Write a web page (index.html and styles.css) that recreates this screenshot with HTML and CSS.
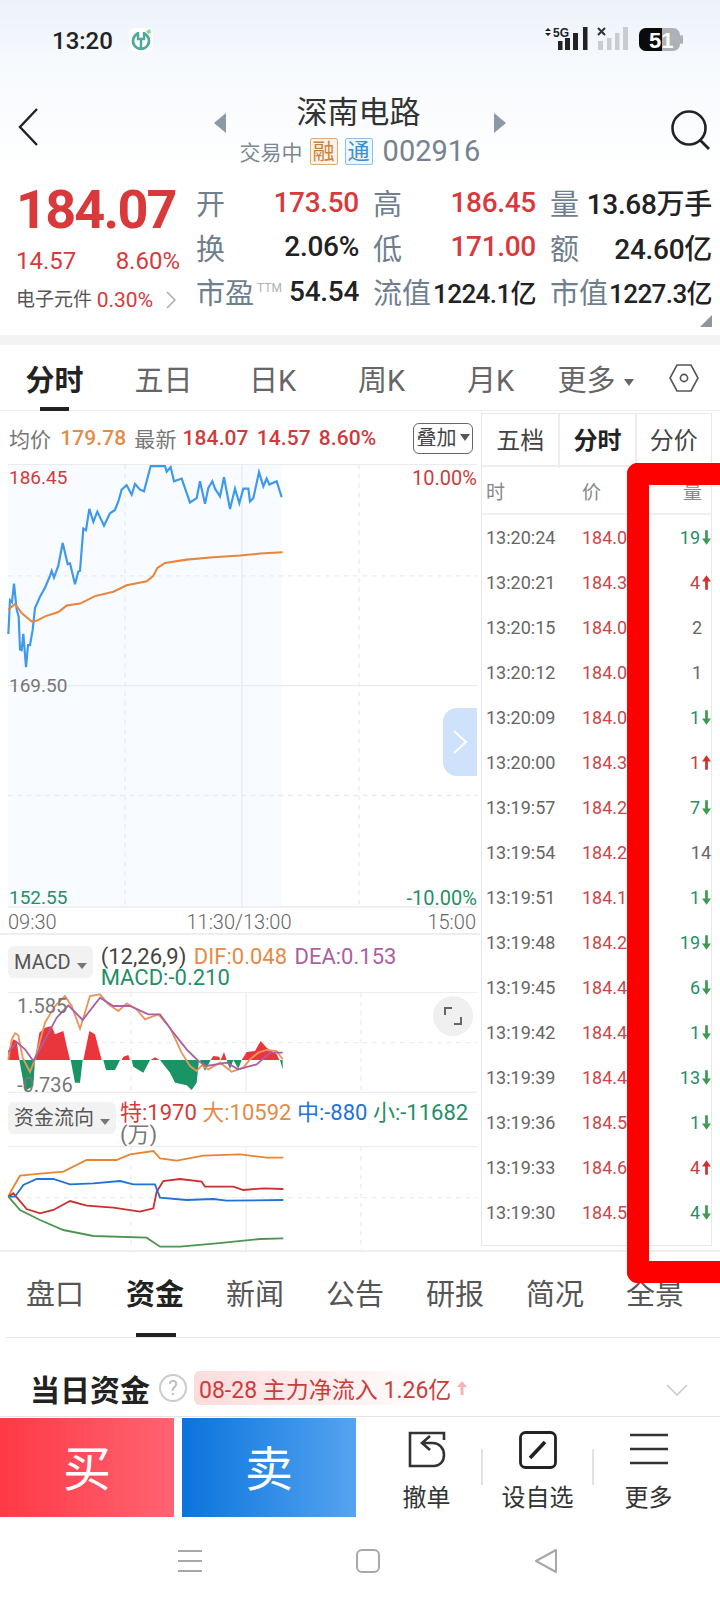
FILE: index.html
```html
<!DOCTYPE html>
<html lang="zh-CN">
<head>
<meta charset="UTF-8">
<meta name="viewport" content="width=device-width, initial-scale=1.0">
<title>深南电路</title>
<link rel="stylesheet" href="styles.css">
</head>
<body>

<div class="page">

 <div class="top">
  <div class="status">
   <span class="clock">13:20</span>
   <svg class="app-logo" width="24" height="24" viewBox="0 0 24 24">
    <rect width="24" height="24" rx="6" fill="#fff"/>
    <path d="M9 5.5a8 8 0 1 0 6 0" fill="none" stroke="#4fa89c" stroke-width="2.6"/>
    <path d="M9 4v7h6V4M12 11v9" fill="none" stroke="#4fa89c" stroke-width="2.4"/>
    <path d="M17 3l4-2 1 4-3 1z" fill="#8fd78a"/>
   </svg>
   <svg class="status-right" width="140" height="24" viewBox="0 0 140 24">
    <path d="M3 1l3 3H0zM3 9L0 6h6z" fill="#222"/>
    <text x="8" y="10" class="sig-text">5G</text>
    <rect x="13" y="14" width="4.5" height="9" fill="#222"/>
    <rect x="20" y="11" width="5" height="12" fill="#222"/>
    <rect x="28" y="6" width="5" height="17" fill="#222"/>
    <rect x="38" y="0" width="4.5" height="23" fill="#222"/>
    <path d="M53 1l7 7M60 1l-7 7" stroke="#333" stroke-width="2"/>
    <rect x="53" y="14" width="5" height="9" fill="#c9cdd2"/>
    <rect x="62" y="11" width="4.5" height="12" fill="#c9cdd2"/>
    <rect x="70" y="6" width="4.5" height="17" fill="#c9cdd2"/>
    <rect x="78" y="0" width="5" height="23" fill="#c9cdd2"/>
    <rect x="94" y="1" width="41" height="23" rx="7" fill="#aeb1b6"/>
    <path d="M101 1h16v23h-16a7 7 0 0 1-7-7V8a7 7 0 0 1 7-7z" fill="#0b0b0b"/>
    <rect x="135" y="8" width="3" height="9" rx="1.5" fill="#aeb1b6"/>
    <text x="104" y="20.5" class="batt-text">51</text>
   </svg>
  </div>

  <div class="title-bar">
   <svg class="back" width="20" height="38" viewBox="0 0 20 38"><path d="M19 1L2 19l17 18" fill="none" stroke="#222" stroke-width="2.4"/></svg>
   <div class="title-mid">
    <span class="tri-left"></span>
    <div class="title-text">
     <div class="stock-name">深南电路</div>
     <div class="stock-sub">
      <span>交易中</span>
      <span class="tag tag-orange">融</span>
      <span class="tag tag-blue">通</span>
      <span class="stock-code">002916</span>
     </div>
    </div>
    <span class="tri-right"></span>
   </div>
   <svg class="search" width="42" height="40" viewBox="0 0 42 40"><circle cx="19" cy="18" r="16.5" fill="none" stroke="#222" stroke-width="2.6"/><path d="M30 30l9 9" stroke="#222" stroke-width="2.8"/></svg>
  </div>

  <div class="quote">
   <div class="quote-left">
    <div class="price">184.07</div>
    <div class="change"><span>14.57</span><span>8.60%</span></div>
    <div class="sector">电子元件 <em>0.30%</em><svg width="10" height="18" viewBox="0 0 10 18"><path d="M1 1l8 8-8 8" fill="none" stroke="#aaa" stroke-width="1.5"/></svg></div>
   </div>
   <div class="stats">
    <div class="stat"><label>开</label><b class="red">173.50</b></div>
    <div class="stat"><label>高</label><b class="red">186.45</b></div>
    <div class="stat"><label>量</label><b>13.68万手</b></div>
    <div class="stat"><label>换</label><b>2.06%</b></div>
    <div class="stat"><label>低</label><b class="red">171.00</b></div>
    <div class="stat"><label>额</label><b>24.60亿</b></div>
    <div class="stat"><label>市盈<sup>TTM</sup></label><b>54.54</b></div>
    <div class="stat"><label>流值</label><b class="tight">1224.1亿</b></div>
    <div class="stat"><label>市值</label><b class="tight">1227.3亿</b></div>
   </div>
   <span class="corner"></span>
  </div>
 </div>

 <div class="band"></div>

 <div class="period-tabs">
  <span class="period active">分时</span>
  <span class="period">五日</span>
  <span class="period">日K</span>
  <span class="period">周K</span>
  <span class="period">月K</span>
  <span class="period more">更多<i class="caret"></i></span>
  <svg class="hex" width="30" height="30" viewBox="0 0 30 30"><path d="M8 2h14l7 13-7 13H8L1 15z" fill="none" stroke="#555" stroke-width="1.6"/><circle cx="15" cy="15" r="3.6" fill="none" stroke="#555" stroke-width="1.6"/></svg>
 </div>

 <div class="main">
  <div class="charts">
   <div class="info-row">
    <span class="gray">均价</span><span class="orange">179.78</span>
    <span class="gray latest">最新</span><span class="red">184.07</span><span class="red">14.57</span><span class="red">8.60%</span>
    <span class="overlay-btn">叠加<i class="caret dark"></i></span>
   </div>

   <div class="price-chart">
    <svg width="480" height="444" viewBox="0 189 1440 1314" preserveAspectRatio="none">
     <rect x="24" y="190" width="822" height="1310" fill="#f8fbff"/>
     <g stroke="#ebebeb" stroke-width="4" fill="none">
      <path d="M24 190H1432M24 845H1432M24 1500H1432M726 190V1500"/>
      <path stroke-dasharray="14 14" d="M24 520H1432M24 1170H1432M375 190V1500M1077 190V1500"/>
     </g>
     <polyline fill="none" stroke="#3e98ec" stroke-width="6.500" points="25,692 30,592 36,598 42,543 50,620 56,640 60,738 65,740 70,692 78,790 84,725 90,725 98,680 105,615 120,582 135,555 150,520 155,505 162,525 175,490 188,423 203,485 210,483 225,545 235,507 240,505 250,380 258,385 268,322 280,360 292,330 312,372 330,335 345,325 355,300 365,265 380,252 395,280 405,248 420,265 432,270 452,195 495,195 500,212 512,198 522,240 545,232 570,303 590,290 600,240 615,307 625,260 637,240 645,262 660,285 672,228 690,322 705,262 718,305 730,262 745,262 750,300 760,290 777,213 790,255 800,232 808,250 830,240 845,287"/>
     <polyline fill="none" stroke="#e8853a" stroke-width="6" points="25,620 45,603 65,630 95,655 110,653 135,640 175,627 200,608 240,602 285,580 340,567 380,548 440,536 460,520 472,497 495,482 560,472 640,465 720,460 780,454 848,450"/>
    </svg>
    <span class="axis left red a-tl">186.45</span>
    <span class="axis red a-tr">10.00%</span>
    <span class="axis left gray a-ml">169.50</span>
    <span class="axis left green a-bl">152.55</span>
    <span class="axis green a-br">-10.00%</span>
    <span class="collapse"><svg width="16" height="28" viewBox="0 0 16 28"><path d="M2 3l12 11L2 25" fill="none" stroke="#fff" stroke-width="2"/></svg></span>
   </div>

   <div class="time-axis"><span>09:30</span><span class="mid-time">11:30/13:00</span><span>15:00</span></div>

   <div class="ind-head">
    <span class="ind-btn">MACD<i class="caret small"></i></span>
    <div class="ind-text">
     <span class="dark">(12,26,9)</span> <span class="orange">DIF:0.048</span> <span class="purple">DEA:0.153</span><br>
     <span class="green">MACD:-0.210</span>
    </div>
   </div>

   <div class="macd-chart">
    <span class="axis gray m-top">1.585</span>
    <span class="axis gray m-bot">-0.736</span>
    <svg width="480" height="101" viewBox="0 198 1440 303">
     <g stroke="#eeeeee" stroke-width="4" fill="none">
      <path d="M24 199H1432M24 499H1432"/>
      <path d="M738 199V499"/>
      <path stroke-dasharray="14 14" d="M24 350H1432M393 199V499M1083 199V499"/>
     </g>
     <g fill="#e9363c">
      <path d="M25 402V375L40 340 50 345 58 402z"/>
      <path d="M105 402L118 320 135 305 155 300 165 325 190 315 200 360 210 402z"/>
      <path d="M250 402L268 315 285 325 305 402z"/>
      <path d="M365 402L370 392 385 387 390 402zM452 402L465 394 478 402zM632 402L640 390 658 392 660 402zM662 402L672 378 680 402z"/>
      <path d="M725 402L740 378 765 375 782 345 800 365 830 385 838 402z"/>
     </g>
     <g fill="#1a9464">
      <path d="M58 402L65 440 75 495 100 480 105 402z"/>
      <path d="M212 402L225 470 240 470 248 402z"/>
      <path d="M310 402L318 432 345 432 360 402z"/>
      <path d="M395 402L400 422 430 440 450 402z"/>
      <path d="M480 402L510 440 525 470 560 478 575 492 590 470 597 402z"/>
      <path d="M600 402L615 435 632 402zM680 402L690 430 700 402zM700 402L715 428 725 402zM840 402L848 430 848 402z"/>
     </g>
     <polyline fill="none" stroke="#e8965a" stroke-width="5.500" points="25,400 35,340 45,322 55,328 68,395 90,438 105,400 135,290 165,240 195,210 215,240 240,308 270,210 300,205 325,235 355,255 380,232 410,250 435,280 475,265 510,305 545,380 570,420 590,435 605,418 625,430 660,410 695,437 730,425 750,400 775,380 800,372 830,375 848,400"/>
     <polyline fill="none" stroke="#ae5fa0" stroke-width="5.500" points="25,378 50,348 75,370 100,405 130,350 170,275 205,238 248,282 300,215 340,240 390,240 445,265 480,265 520,320 560,370 595,405 620,420 680,410 715,430 770,415 810,380 848,380"/>
    </svg>
    <span class="expand"><svg width="20" height="20" viewBox="0 0 20 20"><path d="M2 9V2h7M18 11v7h-7" fill="none" stroke="#666" stroke-width="2"/></svg></span>
   </div>

   <div class="ind-head funds-head">
    <span class="ind-btn">资金流向<i class="caret small"></i></span>
    <div class="ind-text">
     <span class="red">特:1970</span> <span class="orange">大:10592</span> <span class="blue">中:-880</span> <span class="green">小:-11682</span><br>
     <span class="gray">(万)</span>
    </div>
   </div>

   <div class="funds-chart">
    <svg width="480" height="104" viewBox="0 663 1440 312">
     <g stroke="#eeeeee" stroke-width="4" fill="none">
      <path d="M24 665H1432M738 665V975"/>
      <path stroke-dasharray="14 14" d="M24 818H1432M393 665V975M1083 665V975"/>
     </g>
     <g fill="none" stroke-width="5.500">
      <polyline stroke="#e8852f" points="25,815 35,795 60,752 130,745 190,740 260,705 350,705 390,688 460,678 480,700 530,707 610,692 720,688 800,698 850,698"/>
      <polyline stroke="#c9302f" points="25,815 40,805 80,852 120,865 160,855 210,828 260,842 340,848 420,860 460,850 470,800 490,768 540,762 605,770 615,785 700,785 730,795 790,790 850,792"/>
      <polyline stroke="#1f72d8" points="25,815 45,815 70,780 110,762 160,762 210,778 280,775 360,768 400,778 465,778 480,818 560,825 640,822 680,827 850,825"/>
      <polyline stroke="#4d9550" points="25,815 60,855 120,885 190,915 280,933 440,938 480,965 540,965 650,955 780,942 850,940"/>
     </g>
    </svg>
   </div>
  </div>

  <div class="trades">
   <div class="trade-tabs">
    <span>五档</span><span class="on">分时</span><span>分价</span>
   </div>
   <div class="trade-head"><span>时</span><span>价</span><span>量</span></div>
   <div class="trade-row"><span>13:20:24</span><span class="price-cell">184.07</span><span class="qty green">19<svg class="arw"><use href="#down"/></svg></span></div>
   <div class="trade-row"><span>13:20:21</span><span class="price-cell">184.30</span><span class="qty red">4<svg class="arw"><use href="#up"/></svg></span></div>
   <div class="trade-row"><span>13:20:15</span><span class="price-cell">184.07</span><span class="qty flat">2</span></div>
   <div class="trade-row"><span>13:20:12</span><span class="price-cell">184.04</span><span class="qty flat">1</span></div>
   <div class="trade-row"><span>13:20:09</span><span class="price-cell">184.07</span><span class="qty green">1<svg class="arw"><use href="#down"/></svg></span></div>
   <div class="trade-row"><span>13:20:00</span><span class="price-cell">184.35</span><span class="qty red">1<svg class="arw"><use href="#up"/></svg></span></div>
   <div class="trade-row"><span>13:19:57</span><span class="price-cell">184.20</span><span class="qty green">7<svg class="arw"><use href="#down"/></svg></span></div>
   <div class="trade-row"><span>13:19:54</span><span class="price-cell">184.21</span><span class="qty wide">14</span></div>
   <div class="trade-row"><span>13:19:51</span><span class="price-cell">184.18</span><span class="qty green">1<svg class="arw"><use href="#down"/></svg></span></div>
   <div class="trade-row"><span>13:19:48</span><span class="price-cell">184.20</span><span class="qty green">19<svg class="arw"><use href="#down"/></svg></span></div>
   <div class="trade-row"><span>13:19:45</span><span class="price-cell">184.40</span><span class="qty green">6<svg class="arw"><use href="#down"/></svg></span></div>
   <div class="trade-row"><span>13:19:42</span><span class="price-cell">184.40</span><span class="qty green">1<svg class="arw"><use href="#down"/></svg></span></div>
   <div class="trade-row"><span>13:19:39</span><span class="price-cell">184.41</span><span class="qty green">13<svg class="arw"><use href="#down"/></svg></span></div>
   <div class="trade-row"><span>13:19:36</span><span class="price-cell">184.50</span><span class="qty green">1<svg class="arw"><use href="#down"/></svg></span></div>
   <div class="trade-row"><span>13:19:33</span><span class="price-cell">184.60</span><span class="qty red">4<svg class="arw"><use href="#up"/></svg></span></div>
   <div class="trade-row"><span>13:19:30</span><span class="price-cell">184.57</span><span class="qty green">4<svg class="arw"><use href="#down"/></svg></span></div>
  </div>
 </div>

 <div class="sub-tabs">
  <span class="sub">盘口</span>
  <span class="sub active">资金</span>
  <span class="sub">新闻</span>
  <span class="sub">公告</span>
  <span class="sub">研报</span>
  <span class="sub">简况</span>
  <span class="sub">全景</span>
 </div>

 <div class="flow-row">
  <b class="flow-title">当日资金</b>
  <span class="help">?</span>
  <span class="flow-badge">08-28 主力净流入 1.26亿<svg width="10" height="14" viewBox="0 0 10 14"><path d="M5 0l5 6H6.500v8h-3V6H0z" fill="#f6b3b3"/></svg></span>
  <svg class="flow-arrow" width="22" height="12" viewBox="0 0 22 12"><path d="M1 1l10 10L21 1" fill="none" stroke="#c4ccd3" stroke-width="1.6"/></svg>
 </div>

 <div class="trade-bar">
  <div class="buy">买</div>
  <div class="sell">卖</div>
  <div class="tool">
   <svg width="38" height="38" viewBox="0 0 38 38"><path d="M36 9V2H2v33h24c6 0 10-5 10-11 0-7-5-12-11-12H15M22 5l-8 7 8 7" fill="none" stroke="#333" stroke-width="2.600"/></svg>
   <span>撤单</span>
  </div>
  <i class="tool-sep"></i>
  <div class="tool">
   <svg width="38" height="38" viewBox="0 0 38 38"><rect x="1.500" y="1.500" width="35" height="35" rx="5" fill="none" stroke="#222" stroke-width="2.800"/><path d="M11 27l15-16" stroke="#222" stroke-width="3.600"/></svg>
   <span>设自选</span>
  </div>
  <i class="tool-sep"></i>
  <div class="tool">
   <svg width="38" height="38" viewBox="0 0 38 38"><path d="M0 4h38M0 18h38M0 32h38" stroke="#333" stroke-width="2.600"/></svg>
   <span>更多</span>
  </div>
 </div>

 <div class="nav-bar">
  <svg width="24" height="24" viewBox="0 0 24 24"><path d="M0 2h24M0 12h24M0 22h24" stroke="#a8a8a8" stroke-width="2"/></svg>
  <svg width="24" height="24" viewBox="0 0 24 24"><rect x="1" y="1" width="22" height="22" rx="5" fill="none" stroke="#a8a8a8" stroke-width="2"/></svg>
  <svg width="24" height="24" viewBox="0 0 24 24"><path d="M22 1v22L2 12z" fill="none" stroke="#a8a8a8" stroke-width="2" stroke-linejoin="round"/></svg>
 </div>

 <div class="red-frame"></div>

 <svg width="0" height="0" class="defs">
  <symbol id="down" viewBox="0 0 10 16"><path d="M3.500 0h3v9H10l-5 7-5-7h3.500z" fill="#3d9a50"/></symbol>
  <symbol id="up" viewBox="0 0 10 16"><path d="M3.500 16h3V7H10L5 0 0 7h3.500z" fill="#d0302f"/></symbol>
 </svg>
</div>

</body>
</html>
```

FILE: styles.css
```css
body, html {
 margin: 0;
 padding: 0;
 background-color: #fff;
 font-family: Roboto, "Noto Sans CJK SC", sans-serif;
 color: #222;
}
.page {
 position: relative;
 width: 720px;
 height: 1604px;
 overflow: hidden;
}
i { font-style: normal; }

.red { color: #cf3b3c; }
.green { color: #1f8f66; }
.gray { color: #777; }
.orange { color: #e58b45; }
.purple { color: #ae5fa0; }
.blue { color: #1f72d8; }
.dark { color: #444; }

/* top block */
.top {
 height: 335px;
 background: linear-gradient(#ecf2fb 0, #f6f9fd 60px, #fff 170px);
}
.status {
 height: 80px;
 display: flex;
 align-items: center;
 padding-left: 52px;
 box-sizing: border-box;
}
.clock {
 font-size: 24px;
 font-weight: 500;
 width: 77px;
 margin-top: 1px;
}
.status-right {
 margin-left: 392px;
 margin-top: -2px;
}
.sig-text {
 font: 700 12px "Liberation Sans", sans-serif;
 fill: #222;
}
.batt-text {
 font: 700 22px "Liberation Sans", sans-serif;
 fill: #fff;
}

.title-bar {
 height: 92px;
 display: grid;
 grid-template-columns: 1fr auto 1fr;
 align-items: start;
 padding: 0 18px;
 box-sizing: border-box;
}
.back { margin-top: 28px; }
.search {
 justify-self: end;
 margin: 30px -10px 0 0;
}
.title-mid {
 width: 292px;
 display: flex;
 justify-content: space-between;
 align-items: flex-start;
}
.tri-left, .tri-right {
 width: 0;
 height: 0;
 border-top: 10px solid transparent;
 border-bottom: 10px solid transparent;
 margin-top: 33px;
}
.tri-left { border-right: 12px solid #8c98a6; }
.tri-right { border-left: 12px solid #8c98a6; }
.title-text {
 text-align: center;
 margin-top: 15px;
}
.stock-name {
 font-size: 31px;
 line-height: 36px;
 color: #333;
 margin-right: 3px;
}
.stock-sub {
 display: flex;
 align-items: center;
 font-size: 21px;
 color: #7a8794;
 height: 34px;
 margin-top: 3px;
}
.tag {
 width: 26px;
 height: 25px;
 margin-left: 7px;
 border: 1px solid;
 border-radius: 2px;
 font-size: 22px;
 line-height: 25px;
 text-align: center;
}
.tag-orange { color: #c9833f; border-color: #e0a877; background: #fdf3e9; }
.tag-blue { color: #3b8ed0; border-color: #8cc0e8; background: #edf6fd; }
.stock-code {
 font-size: 29px;
 margin-left: 10px;
 color: #75838f;
}

.quote {
 position: relative;
 height: 163px;
 display: flex;
 padding-top: 8px;
 box-sizing: border-box;
}
.quote-left {
 width: 196px;
 padding: 1px 0 0 16px;
 box-sizing: border-box;
}
.price {
 font-size: 54px;
 font-weight: 700;
 line-height: 50px;
 margin-top: 4px;
 margin-left: 0;
 letter-spacing: -1.800px;
 color: #d9393b;
}
.change {
 display: flex;
 justify-content: space-between;
 width: 164px;
 font-size: 24px;
 line-height: 28px;
 margin-top: 12px;
 color: #d9393b;
}
.sector {
 display: flex;
 align-items: center;
 font-size: 19px;
 color: #555;
 line-height: 24px;
 margin-top: 13px;
 white-space: pre;
}
.sector em {
 font-style: normal;
 font-size: 21px;
 color: #d9393b;
}
.sector svg { margin-left: 13px; }
.stats {
 width: 516px;
 display: grid;
 grid-template-columns: 163px 163px 162px;
 column-gap: 14px;
 grid-auto-rows: 44.500px;
}
.stat {
 display: flex;
 justify-content: space-between;
 align-items: center;
 white-space: nowrap;
}
.stat label {
 font-size: 29px;
 color: #6f7f8e;
}
.stat sup {
 font-size: 12px;
 color: #aab2ba;
 vertical-align: 12px;
 line-height: 0;
 margin-left: 3px;
}
.stat b {
 font-size: 28px;
 font-weight: 500;
 letter-spacing: -0.3px;
}
.stat b.red { color: #d9393b; }
.stat b.tight {
 font-size: 26px;
 letter-spacing: -0.6px;
}
.corner {
 position: absolute;
 right: 8px;
 bottom: 8px;
 border-left: 12px solid transparent;
 border-bottom: 12px solid #8e959c;
}

.band {
 height: 10px;
 background-color: #f3f3f3;
}

/* period tabs */
.period-tabs {
 height: 66px;
 display: flex;
 align-items: center;
 border-bottom: 1px solid #eee;
 box-sizing: border-box;
 position: relative;
}
.period {
 width: 109px;
 text-align: center;
 font-size: 29px;
 color: #666;
 white-space: nowrap;
}
.period.more { margin-left: -4px; }
.period.active {
 font-weight: 700;
 color: #222;
}
.period.active::after {
 content: "";
 position: absolute;
 left: 40px;
 bottom: -1px;
 width: 29px;
 height: 4px;
 background-color: #222;
}
.caret {
 display: inline-block;
 border-left: 5px solid transparent;
 border-right: 5px solid transparent;
 border-top: 7px solid #666;
 margin-left: 8px;
 vertical-align: 5px;
}
.caret.dark { border-top-color: #555; margin-left: 3px; vertical-align: 4px; }
.caret.small { border-top-color: #777; margin-left: 6px; vertical-align: 0; border-top-width: 6px; }
.hex { margin-left: 19px; }

/* main */
.main {
 display: flex;
 height: 839px;
 border-bottom: 2px solid #eee;
 box-sizing: content-box;
 margin-bottom: -2px;
}
.charts { width: 480px; }
.info-row {
 height: 53px;
 display: flex;
 align-items: center;
 padding-left: 9px;
 font-size: 21px;
 font-weight: 500;
 letter-spacing: 0.1px;
 position: relative;
}
.info-row span { margin-right: 8px; white-space: nowrap; }
.info-row .gray { font-weight: 400; margin-right: 9px; }
.info-row .latest { margin-right: 6px; }
.overlay-btn {
 position: absolute;
 left: 413px;
 top: 12px;
 margin: 0 !important;
 width: 60px;
 height: 31px;
 box-sizing: border-box;
 border: 1.500px solid #666;
 border-radius: 6px;
 font-size: 20px;
 font-weight: 400;
 line-height: 28px;
 text-align: center;
 color: #444;
 letter-spacing: 0;
}
.price-chart {
 position: relative;
 height: 444px;
}
.price-chart svg, .macd-chart svg, .funds-chart svg { display: block; }
.axis {
 position: absolute;
 font-size: 20px;
 line-height: 22px;
}
.axis.left { font-size: 19px; }
.a-tl { left: 9px; top: 3px; }
.a-tr { right: 3px; top: 3px; }
.a-ml { left: 9px; top: 211px; }
.a-bl { left: 9px; top: 423px; }
.a-br { right: 3px; top: 423px; }
.collapse {
 position: absolute;
 left: 443px;
 top: 244px;
 width: 34px;
 height: 68px;
 background-color: #cfe2fb;
 border-radius: 14px 0 0 14px;
 display: flex;
 align-items: center;
 justify-content: center;
}
.time-axis {
 height: 27px;
 display: flex;
 justify-content: space-between;
 padding: 2px 4px 0 8px;
 font-size: 20px;
 line-height: 24px;
 color: #666;
 font-weight: 300;
 border-bottom: 2px solid #eee;
 box-sizing: border-box;
}
.mid-time { margin-right: 6px; }
.ind-head {
 height: 57px;
 display: flex;
 padding: 11px 0 0 8px;
 box-sizing: border-box;
}
.funds-head { height: 53px; padding-top: 9px; }
.ind-btn {
 height: 32px;
 flex: none;
 padding: 0 6px;
 background-color: #f2f2f2;
 border-radius: 6px;
 font-size: 20px;
 line-height: 32px;
 color: #555;
 white-space: nowrap;
}
.ind-text {
 font-size: 22px;
 line-height: 21px;
 margin-left: 8px;
 white-space: nowrap;
}
.ind-text span {
 display: inline-block;
 margin-right: 2px;
}
.funds-head .ind-text { margin-left: 4px; line-height: 22px; }
.funds-head .ind-text span { margin-right: 0; }
.macd-chart {
 position: relative;
 height: 101px;
}
.m-top { left: 17px; top: 3px; }
.m-bot { left: 17px; top: 82px; }
.expand {
 position: absolute;
 left: 433px;
 top: 4px;
 width: 40px;
 height: 40px;
 border-radius: 50%;
 background-color: #f0f0f0;
 display: flex;
 align-items: center;
 justify-content: center;
}
.funds-chart { height: 104px; }

/* trade list */
.trades {
 width: 231px;
 height: 833px;
 margin: 2px 0 0 1px;
 border: 1px solid #e8e8e8;
 box-sizing: border-box;
}
.trade-tabs {
 display: grid;
 grid-template-columns: 1fr 1fr 1fr;
 height: 51px;
 border-bottom: 2px solid #eee;
 font-size: 24px;
 line-height: 54px;
 text-align: center;
 color: #444;
}
.trade-tabs span + span { border-left: 2px solid #eee; }
.trade-tabs .on { font-weight: 700; color: #222; }
.trade-head, .trade-row {
 display: grid;
 grid-template-columns: 96px 1fr auto;
 padding-left: 4px;
 align-items: center;
}
.trade-head {
 height: 46px;
 font-size: 19px;
 color: #888;
 border-bottom: 2px solid #f0f0f0;
 padding-right: 9px;
}
.trade-row {
 height: 45px;
 font-size: 18px;
 color: #666;
}
.price-cell { color: #c8484a; }
.qty {
 display: flex;
 align-items: center;
 justify-content: flex-end;
}
.qty.flat { padding-right: 9px; }
.arw {
 width: 9px;
 height: 15px;
 margin-left: 2px;
}

/* lower tabs */
.sub-tabs {
 height: 88px;
 margin-left: 6px;
 display: flex;
 align-items: center;
 border-bottom: 1px solid #e6e6e6;
 box-sizing: border-box;
 position: relative;
 padding-bottom: 3px;
}
.sub {
 width: 100px;
 flex: none;
 text-align: center;
 font-size: 29px;
 color: #555;
 margin-left: -1px;
 margin-right: 1px;
}
.sub.active {
 font-weight: 700;
 color: #222;
}
.sub.active::after {
 content: "";
 position: absolute;
 left: 130px;
 bottom: 0;
 width: 40px;
 height: 4px;
 background-color: #222;
}
.flow-row {
 height: 79px;
 display: flex;
 align-items: center;
 padding: 22px 0 0 30px;
 border-bottom: 1px solid #e4e4e4;
 box-sizing: border-box;
 position: relative;
}
.flow-title {
 font-size: 30px;
 color: #222;
 white-space: nowrap;
}
.help {
 width: 24px;
 height: 24px;
 margin-left: 9px;
 border: 2px solid #ccc;
 border-radius: 50%;
 font-size: 20px;
 line-height: 24px;
 text-align: center;
 color: #bbb;
}
.flow-badge {
 margin-left: 7px;
 height: 34px;
 width: 278px;
 padding-left: 5px;
 box-sizing: border-box;
 display: flex;
 align-items: center;
 font-size: 23px;
 color: #cc3c3c;
 white-space: nowrap;
 border-radius: 6px;
 background: linear-gradient(90deg, #fbdcdc, #fff 90%);
}
.flow-badge svg { margin-left: 6px; }
.flow-arrow {
 position: absolute;
 right: 32px;
 top: 46px;
}
.trade-bar {
 height: 100px;
 display: flex;
 align-items: stretch;
}
.buy, .sell {
 width: 174px;
 margin-top: 1px;
 padding-bottom: 6px;
 box-sizing: border-box;
 display: flex;
 align-items: center;
 justify-content: center;
 font-size: 48px;
 color: #fff;
}
.buy { background: linear-gradient(90deg, #ff3945, #ff6372); }
.sell {
 margin: 1px 15px 0 8px;
 background: linear-gradient(90deg, #0a74dc, #55a4ef);
}
.tool {
 width: 111px;
 display: flex;
 flex-direction: column;
 align-items: center;
 padding-top: 14px;
 font-size: 24px;
 color: #333;
 box-sizing: border-box;
}
.tool span { margin-top: 14px; line-height: 30px; white-space: nowrap; }
.tool-sep {
 width: 2px;
 height: 36px;
 margin: 32px -1px 0;
 background-color: #e2e2e2;
}
.nav-bar {
 height: 88px;
 display: flex;
 align-items: center;
 gap: 154px;
 padding-left: 178px;
}

/* annotation drawn over the screenshot */
.red-frame {
 position: absolute;
 left: 627px;
 top: 463px;
 width: 120px;
 height: 820px;
 box-sizing: border-box;
 border: 22px solid #ff0000;
 border-right: 0;
 border-radius: 11px 0 0 11px;
}
.defs { position: absolute; }
```
